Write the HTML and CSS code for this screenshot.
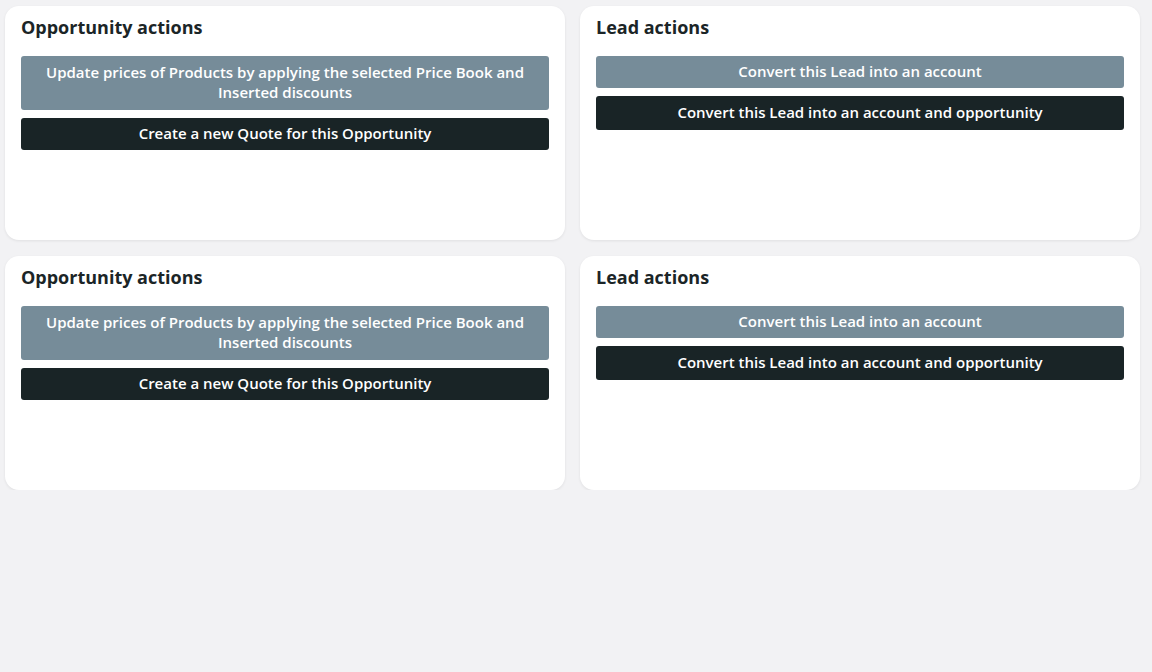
FILE: index.html
```html
<!DOCTYPE html>
<html lang="en">
<head>
<meta charset="utf-8">
<title>Actions</title>
<link rel="stylesheet" href="styles.css">
</head>
<body>
<div class="grid">
  <section class="card">
    <h2 class="card-title">Opportunity actions</h2>
    <div class="actions">
      <button class="btn btn-secondary btn-wrap">Update prices of Products by applying the selected Price Book and Inserted discounts</button>
      <button class="btn btn-primary">Create a new Quote for this Opportunity</button>
    </div>
  </section>
  <section class="card">
    <h2 class="card-title">Lead actions</h2>
    <div class="actions">
      <button class="btn btn-secondary">Convert this Lead into an account</button>
      <button class="btn btn-primary btn-tall">Convert this Lead into an account and opportunity</button>
    </div>
  </section>
  <section class="card">
    <h2 class="card-title">Opportunity actions</h2>
    <div class="actions">
      <button class="btn btn-secondary btn-wrap">Update prices of Products by applying the selected Price Book and Inserted discounts</button>
      <button class="btn btn-primary">Create a new Quote for this Opportunity</button>
    </div>
  </section>
  <section class="card">
    <h2 class="card-title">Lead actions</h2>
    <div class="actions">
      <button class="btn btn-secondary">Convert this Lead into an account</button>
      <button class="btn btn-primary btn-tall">Convert this Lead into an account and opportunity</button>
    </div>
  </section>
</div>
</body>
</html>
```
FILE: styles.css
```css
* { box-sizing: border-box; }
html, body {
  margin: 0;
  padding: 0;
  background: #f2f2f4;
  font-family: "Open Sans", "Liberation Sans", sans-serif;
}
.grid {
  display: grid;
  grid-template-columns: 560px 560px;
  column-gap: 15px;
  row-gap: 16px;
  padding: 6px 0 0 5px;
}
.card {
  background: #ffffff;
  border-radius: 14px;
  box-shadow: 0 1px 3px rgba(0, 0, 0, 0.08);
  height: 234px;
  padding: 9px 16px 16px;
}
.card-title {
  margin: 0;
  font-size: 18px;
  line-height: 24px;
  font-weight: 700;
  color: #1b2527;
}
.actions {
  margin-top: 17px;
  display: flex;
  flex-direction: column;
  gap: 8px;
}
.btn {
  display: block;
  width: 100%;
  border: none;
  border-radius: 3px;
  font-family: inherit;
  font-size: 15px;
  font-weight: 600;
  line-height: 20px;
  color: #ffffff;
  padding: 5px 12px 7px;
  text-align: center;
}
.btn-secondary { background: #768c99; }
.btn-primary { background: #192426; }
.btn-wrap { padding: 6px 12px 8px; }
.btn-tall { padding: 6px 12px 8px; }
```
